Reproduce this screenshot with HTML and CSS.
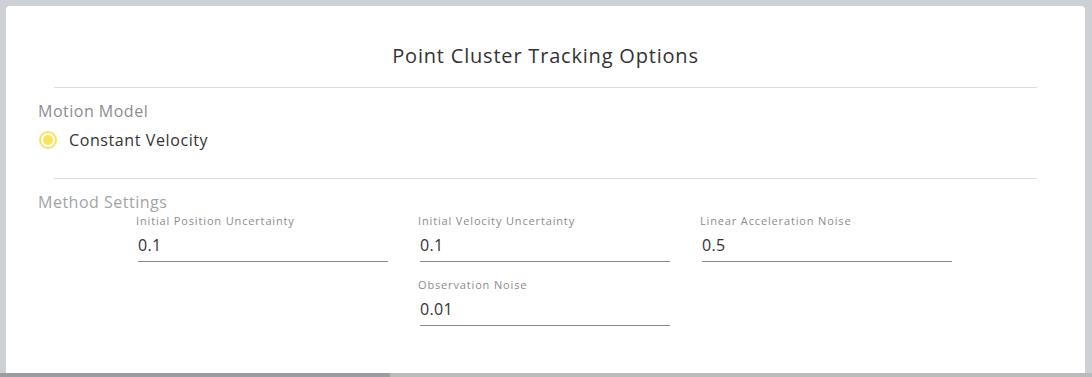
FILE: index.html
```html
<!DOCTYPE html>
<html lang="en">
<head>
  <meta charset="UTF-8" />
  <meta name="viewport" content="width=device-width, initial-scale=1.0" />
  <title>Point Cluster Tracking Options</title>
  <link rel="stylesheet" href="styles.css">
</head>
<body>
  <div class="page">
    <div class="card">
      <h1 class="title">Point Cluster Tracking Options</h1>
      <hr class="divider" />

      <div class="section">
        <p class="section-title">Motion Model</p>
        <label class="radio-row">
          <span class="radio"><span class="radio-dot"></span></span>
          <span class="radio-label">Constant Velocity</span>
        </label>
      </div>
      <hr class="divider divider-low" />

      <div class="section">
        <p class="section-title light">Method Settings</p>
        <div class="fields">
          <div class="field">
            <label class="field-label">Initial Position Uncertainty</label>
            <input class="field-input" type="text" value="0.1" />
          </div>
          <div class="field">
            <label class="field-label">Initial Velocity Uncertainty</label>
            <input class="field-input" type="text" value="0.1" />
          </div>
          <div class="field">
            <label class="field-label">Linear Acceleration Noise</label>
            <input class="field-input" type="text" value="0.5" />
          </div>
          <div class="field col-2">
            <label class="field-label">Observation Noise</label>
            <input class="field-input" type="text" value="0.01" />
          </div>
        </div>
      </div>
    </div>
  </div>
  <div class="scrollbar"><div class="scroll-thumb"></div></div>
</body>
</html>
```

FILE: styles.css
```css
html, body {
  height: 100%;
}
body {
  margin: 0;
  background-color: #cdd1d5;
  font-family: "Open Sans", Arial, sans-serif;
  overflow: hidden;
  display: flex;
  flex-direction: column;
}
.page {
  flex: 1;
  padding: 6px 7px 0 6px;
}
.card {
  height: 367px;
  box-sizing: border-box;
  background: #fff;
  border-radius: 4px 4px 0 0;
  padding-top: 38px;
}
.title {
  margin: 0 0 19px;
  font-size: 20px;
  line-height: 24px;
  font-weight: 400;
  letter-spacing: 0.8px;
  color: #333;
  text-align: center;
}
.divider {
  margin: 0 48px;
  border: none;
  border-top: 1px solid #dedede;
}
.divider-low {
  margin-top: 28px;
}
.section {
  padding: 13px 0 0 32px;
}
.section-title {
  margin: 0;
  font-size: 16px;
  line-height: 20px;
  letter-spacing: 0.5px;
  color: #898e93;
}
.section-title.light {
  color: #a1a4a7;
}
.radio-row {
  display: flex;
  align-items: center;
  margin-top: 9px;
  height: 20px;
}
.radio {
  width: 14px;
  height: 14px;
  border: 2px solid #f8e35c;
  border-radius: 50%;
  display: flex;
  align-items: center;
  justify-content: center;
  margin: 0 12px 0 1px;
}
.radio-dot {
  width: 10px;
  height: 10px;
  border-radius: 50%;
  background: #f8e35c;
}
.radio-label {
  font-size: 16px;
  letter-spacing: 0.6px;
  color: #333;
}
.fields {
  display: grid;
  grid-template-columns: repeat(3, 252px);
  column-gap: 30px;
  row-gap: 16px;
  margin: 2px 0 0 98px;
}
.col-2 {
  grid-column: 2;
}
.field {
  display: flex;
  flex-direction: column;
}
.field-label {
  font-size: 11px;
  line-height: 14px;
  letter-spacing: 0.85px;
  color: #8c8c8c;
}
.field-input {
  margin-left: 2px;
  width: 250px;
  box-sizing: border-box;
  padding: 7px 0 6px;
  border: none;
  border-bottom: 1px solid #8a8a8a;
  outline: none;
  font-family: inherit;
  font-size: 16px;
  line-height: 20px;
  letter-spacing: 0.3px;
  height: 34px;
  color: #333;
  background: transparent;
}
.scrollbar {
  height: 4px;
  background: #b9bcbf;
}
.scroll-thumb {
  width: 390px;
  height: 100%;
  background: #9a9ea2;
}
```
